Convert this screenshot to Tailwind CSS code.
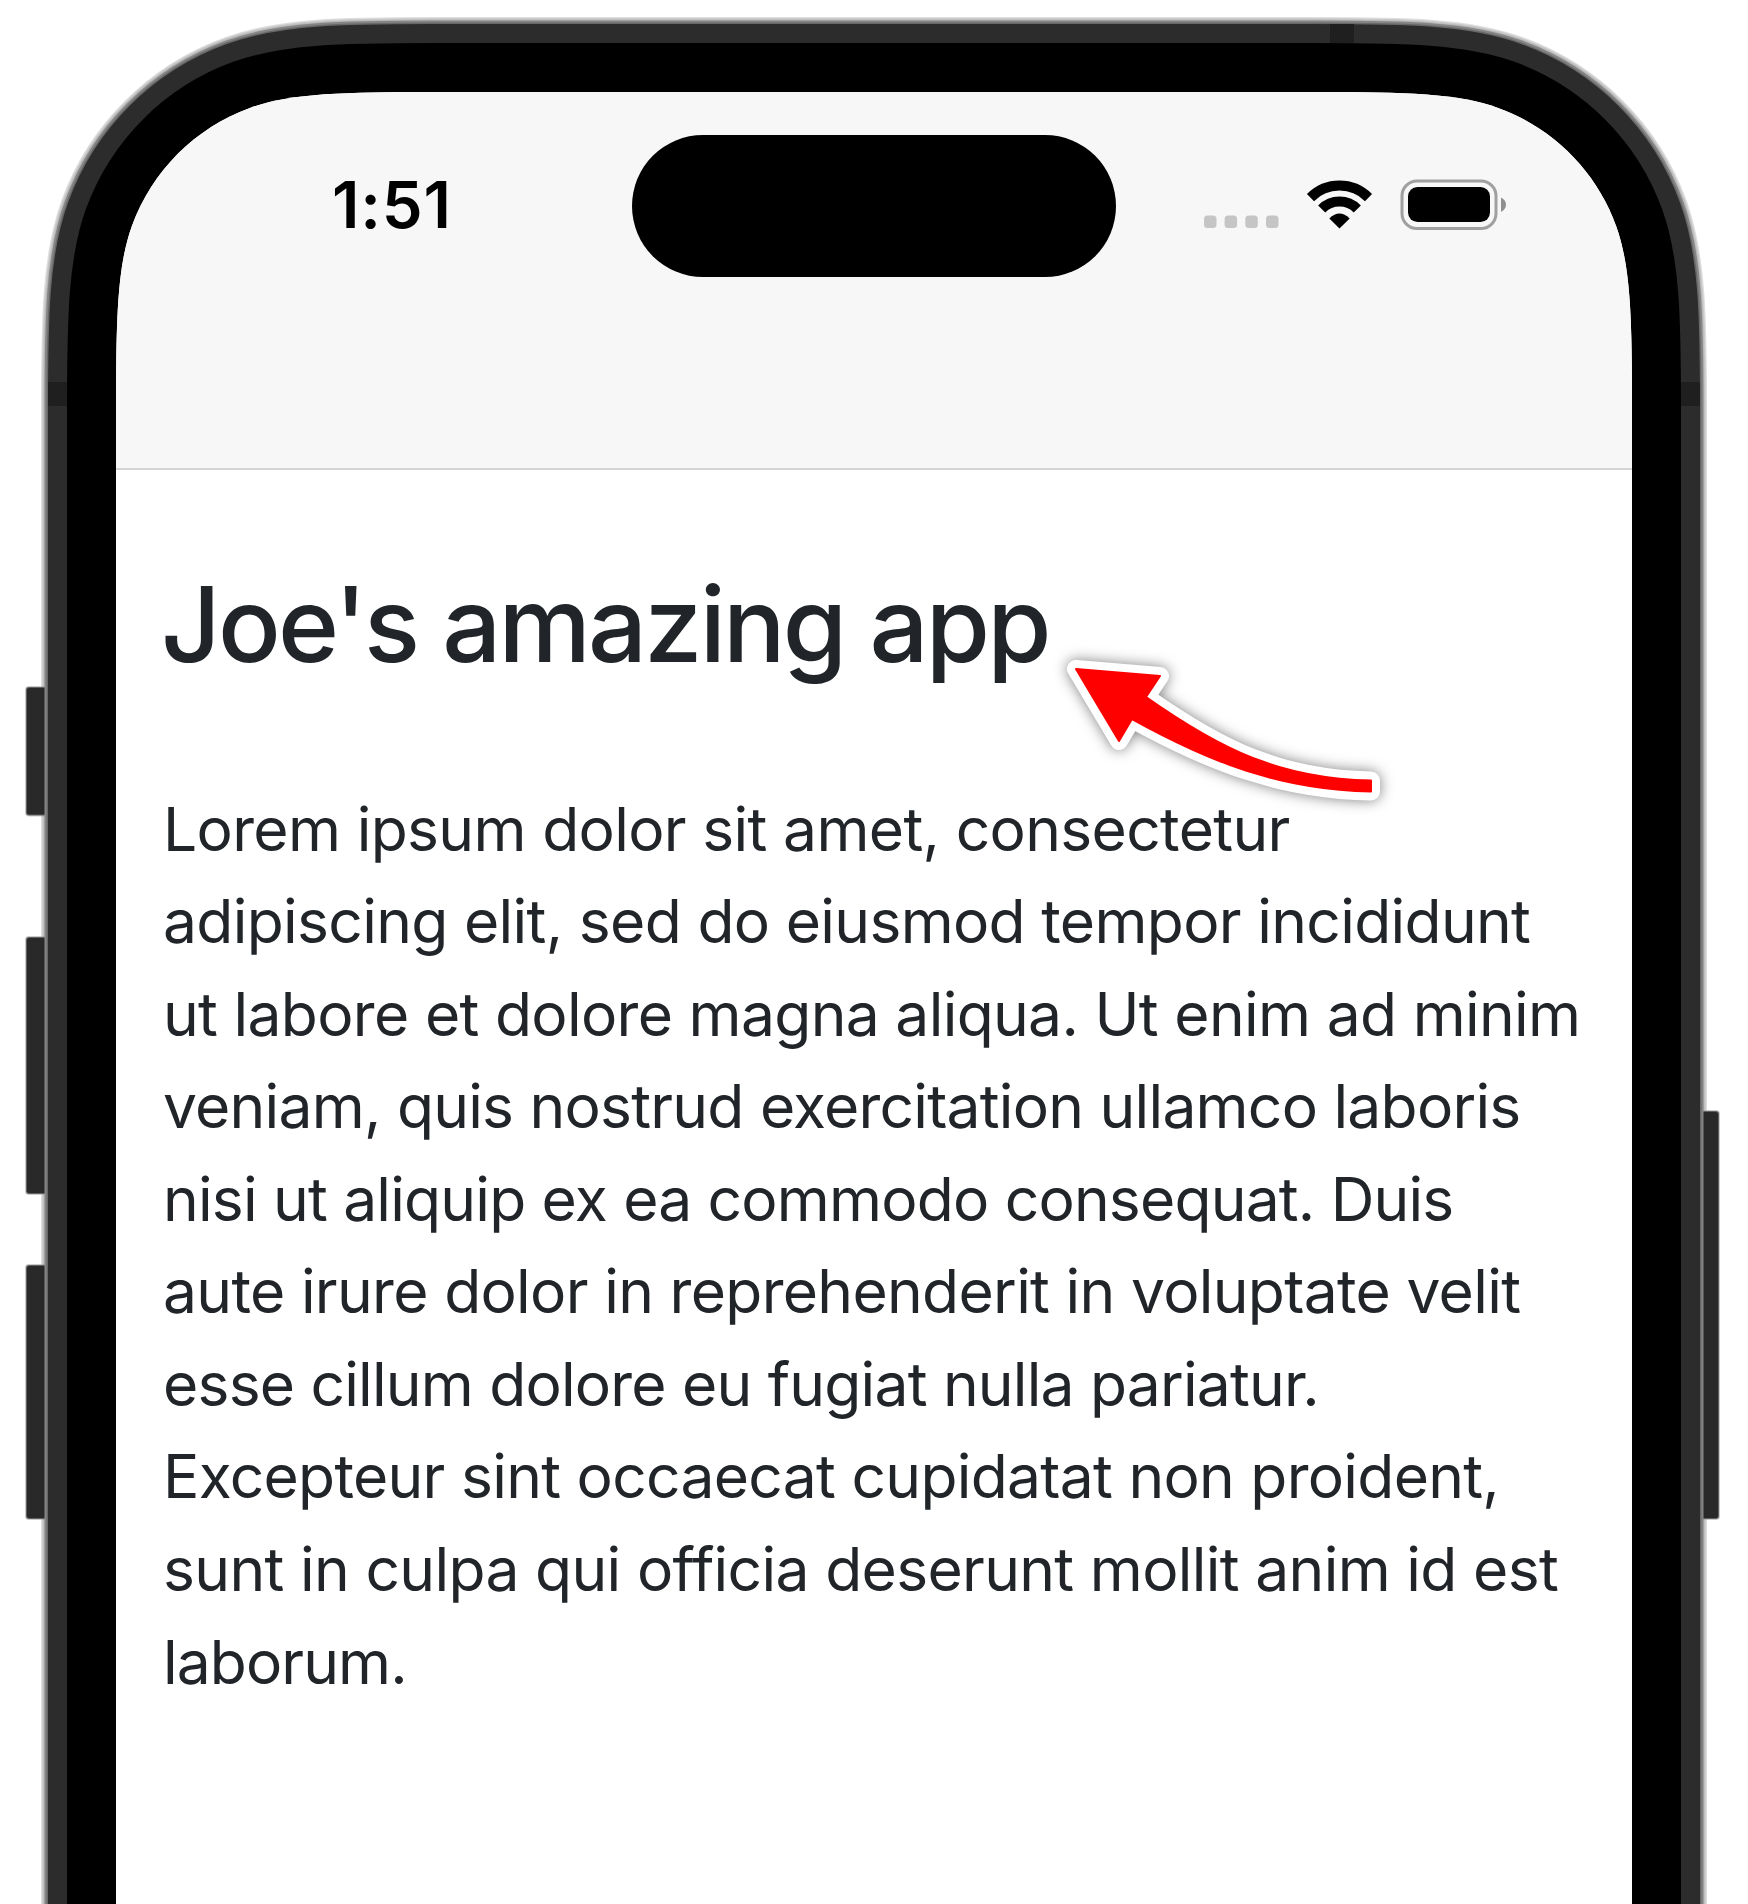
<!DOCTYPE html>
<html lang="en">
<head>
<meta charset="utf-8">
<title>Joe's amazing app</title>
<script src="https://cdn.jsdelivr.net/npm/@tailwindcss/browser@4"></script>
</head>
<body class="bg-white overflow-hidden">
<main class="relative w-[1748px] h-[1904px] overflow-hidden font-['Inter',sans-serif]">
  <!-- device body -->
  <svg class="absolute inset-0" width="1748" height="1904" viewBox="0 0 1748 1904">
    <defs>
      <path id="screen" d="M116 2100V410C116 316 117.500 266 131.900 225.900C151.800 171 195 127.800 249.900 107.900C290 93.500 340 92 434 92H1314C1408 92 1458 93.500 1498.100 107.900C1553 127.800 1596.200 171 1616.100 225.900C1630.500 266 1632 316 1632 410V2100Z"/>
      <clipPath id="clip"><use href="#screen"/></clipPath>
    </defs>
    <g fill="none">
      <use href="#screen" stroke="#dedede" stroke-width="150"/>
      <use href="#screen" stroke="#c8c8c8" stroke-width="147.500"/>
      <use href="#screen" stroke="#b8b8b8" stroke-width="145"/>
    </g>
    <g fill="#292929" stroke="#999" stroke-opacity=".5" stroke-width="2">
      <rect x="26" y="687" width="24" height="128.500" rx="3"/>
      <rect x="26" y="937" width="24" height="257" rx="3"/>
      <rect x="26" y="1265" width="24" height="254" rx="3"/>
      <rect x="1696" y="1111" width="23" height="408" rx="3"/>
    </g>
    <g fill="none">
      <use href="#screen" stroke="#858585" stroke-width="143"/>
      <use href="#screen" stroke="#686868" stroke-width="139"/>
      <use href="#screen" stroke="#2c2c2c" stroke-width="136"/>
    </g>
    <g fill="#1f1f1f">
      <rect x="48" y="382" width="19" height="24"/>
      <rect x="1681" y="382" width="19" height="24"/>
      <rect x="1330" y="24" width="24" height="19"/>
    </g>
    <use href="#screen" fill="none" stroke="#000" stroke-width="98"/>
    <use href="#screen" fill="#fff"/>
    <g clip-path="url(#clip)">
      <rect x="116" y="92" width="1516" height="376" fill="#f7f7f7"/>
      <rect x="116" y="468" width="1516" height="2" fill="#d3d4d3"/>
    </g>
  </svg>

  <div class="relative px-[116px] pt-[92px]">
    <header class="relative h-[378px] flex items-start justify-between pl-[216px] pr-[126px] pt-[43px]">
      <time class="w-[130px] mt-[30px] text-[65px] leading-[80px] font-semibold text-black whitespace-nowrap tracking-[0.800px]">1:51</time>
      <div class="absolute left-[516px] top-[43px] w-[484px] h-[142px] rounded-full bg-black"></div>
      <svg class="mt-[42px]" width="306" height="58" viewBox="1200 177 306 58">
        <g fill="#c5c5c5">
          <rect x="1204" y="215.500" width="12.500" height="12.500" rx="3.500"/>
          <rect x="1224.600" y="215.500" width="12.500" height="12.500" rx="3.500"/>
          <rect x="1245.300" y="215.500" width="12.500" height="12.500" rx="3.500"/>
          <rect x="1266" y="215.500" width="12.500" height="12.500" rx="3.500"/>
        </g>
        <g fill="none" stroke="#000" stroke-width="10">
          <path d="M1310.500 197.600A41 41 0 0 1 1368.500 197.600"/>
          <path d="M1321.700 209A25 25 0 0 1 1357.300 209"/>
        </g>
        <path d="M1329.300 218.500Q1339.500 208.500 1349.700 218.500L1339.500 228.500Z"/>
        <rect x="1402" y="181" width="94" height="47.500" rx="15" fill="none" stroke="#a0a0a0" stroke-width="3"/>
        <rect x="1408" y="187" width="82" height="35" rx="9.500"/>
        <path d="M1501 197.500Q1506 200 1506 204.500T1501 212Z" fill="#909090"/>
      </svg>
    </header>
    <article class="pl-[47px] text-[#212529]">
      <h1 class="-ml-0.5 pt-[89px] text-[104px] leading-[130px] font-medium whitespace-nowrap tracking-[-2.800px]">Joe's amazing app</h1>
      <p class="mt-[93.500px] text-[60.500px] leading-[92.570px] whitespace-nowrap">
        <span class="block tracking-[-0.650px]">Lorem ipsum dolor sit amet, consectetur</span>
        <span class="block tracking-[-0.670px]">adipiscing elit, sed do eiusmod tempor incididunt</span>
        <span class="block tracking-[-0.670px]">ut labore et dolore magna aliqua. Ut enim ad minim</span>
        <span class="block tracking-[-0.750px]">veniam, quis nostrud exercitation ullamco laboris</span>
        <span class="block tracking-[-0.800px]">nisi ut aliquip ex ea commodo consequat. Duis</span>
        <span class="block tracking-[-0.670px]">aute irure dolor in reprehenderit in voluptate velit</span>
        <span class="block tracking-[-0.790px]">esse cillum dolore eu fugiat nulla pariatur.</span>
        <span class="block tracking-[-0.700px]">Excepteur sint occaecat cupidatat non proident,</span>
        <span class="block tracking-[-0.660px]">sunt in culpa qui officia deserunt mollit anim id est</span>
        <span class="block tracking-[-0.900px]">laborum.</span>
      </p>
    </article>
  </div>

  <!-- pointer arrow -->
  <svg class="absolute left-[1040px] top-[630px] overflow-visible drop-shadow-[0_0_7px_rgba(0,0,0,0.5)]" width="370" height="190" viewBox="0 0 370 190">
    <path d="M36 39L120 46L106 67C180 119 240 149 331 150.500V161.500C240 160 170 132 92 89L79 111Z" fill="#f00" stroke="#fff" stroke-width="18" stroke-linejoin="round"/>
    <path d="M36 39L120 46L106 67C180 119 240 149 331 150.500V161.500C240 160 170 132 92 89L79 111Z" fill="#f00" stroke="#f00" stroke-width="2" stroke-linejoin="round"/>
  </svg>
</main>
</body>
</html>
